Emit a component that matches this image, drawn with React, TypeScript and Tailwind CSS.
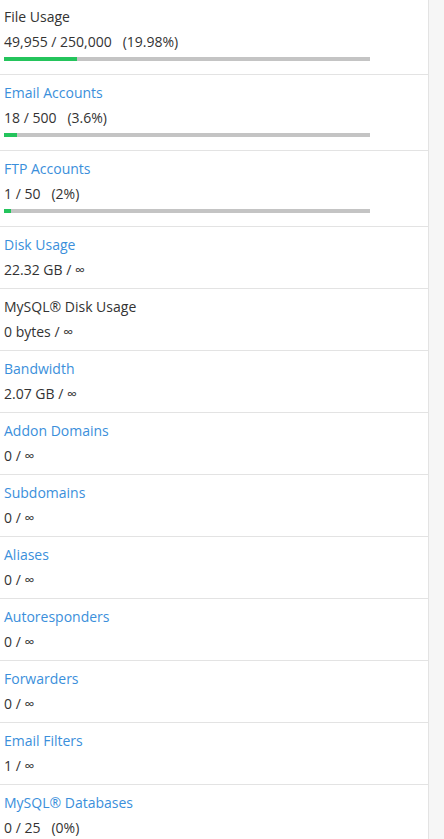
type Stat = {
  label: string;
  value: string;
  pct?: string;
  bar?: number;
  link?: boolean;
};

const stats: Stat[] = [
  { label: "File Usage", value: "49,955 / 250,000", pct: "(19.98%)", bar: 19.98 },
  { label: "Email Accounts", value: "18 / 500", pct: "(3.6%)", bar: 3.6, link: true },
  { label: "FTP Accounts", value: "1 / 50", pct: "(2%)", bar: 2, link: true },
  { label: "Disk Usage", value: "22.32 GB / ∞", link: true },
  { label: "MySQL® Disk Usage", value: "0 bytes / ∞" },
  { label: "Bandwidth", value: "2.07 GB / ∞", link: true },
  { label: "Addon Domains", value: "0 / ∞", link: true },
  { label: "Subdomains", value: "0 / ∞", link: true },
  { label: "Aliases", value: "0 / ∞", link: true },
  { label: "Autoresponders", value: "0 / ∞", link: true },
  { label: "Forwarders", value: "0 / ∞", link: true },
  { label: "Email Filters", value: "1 / ∞", link: true },
  { label: "MySQL® Databases", value: "0 / 25", pct: "(0%)", link: true },
];

function StatRow({ stat, first }: { stat: Stat; first: boolean }) {
  return (
    <div
      className={`px-1 ${first ? "pt-[7px]" : "border-t border-[#e3e3e3] pt-2"} ${
        stat.bar !== undefined ? "pb-[13px]" : "pb-2"
      }`}
    >
      <div
        className={`text-[14px] leading-5 ${stat.link ? "text-[#3b8fdb]" : "text-[#333333]"}`}
      >
        {stat.label}
      </div>
      <div className="mt-[5px] text-[14px] leading-5 text-[#333333]">
        {stat.value}
        {stat.pct && <span className="pl-[11px]">{stat.pct}</span>}
      </div>
      {stat.bar !== undefined && (
        <div className="mt-[5px] h-1 w-[366px] bg-[#c4c4c4]">
          <div className="h-1 bg-[#24c45c]" style={{ width: `${stat.bar}%` }} />
        </div>
      )}
    </div>
  );
}

export default function App() {
  return (
    <div
      className="flex h-[839px] w-[444px] overflow-hidden bg-[#f6f6f6]"
      style={{ fontFamily: '"Open Sans", "Liberation Sans", sans-serif' }}
    >
      <div className="w-[429px] shrink-0 border-r border-[#e3e3e3] bg-white">
        {stats.map((s, i) => (
          <StatRow key={s.label} stat={s} first={i === 0} />
        ))}
      </div>
    </div>
  );
}
